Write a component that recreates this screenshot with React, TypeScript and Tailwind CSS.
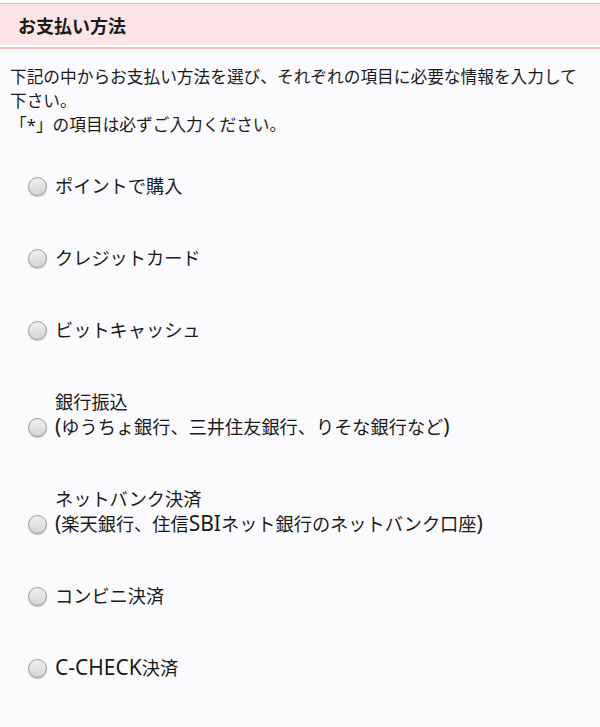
import React, { useState } from 'react';

const methods: { id: string; lines: string[] }[] = [
  { id: 'point', lines: ['ポイントで購入'] },
  { id: 'credit', lines: ['クレジットカード'] },
  { id: 'bitcash', lines: ['ビットキャッシュ'] },
  { id: 'bank', lines: ['銀行振込', '(ゆうちょ銀行、三井住友銀行、りそな銀行など)'] },
  { id: 'netbank', lines: ['ネットバンク決済', '(楽天銀行、住信SBIネット銀行のネットバンク口座)'] },
  { id: 'conveni', lines: ['コンビニ決済'] },
  { id: 'ccheck', lines: ['C-CHECK決済'] },
];

// latin runs are set a little larger so they sit level with the kana
const mixed = (s: string) =>
  s.split(/([\x21-\x7e]+)/).map((part, i) =>
    /^[\x21-\x7e]+$/.test(part) ? (
      <span key={i} className="text-[21px] leading-[20px]">
        {part}
      </span>
    ) : (
      part
    )
  );

const Radio = ({ checked }: { checked: boolean }) => (
  <span className="relative block w-[19px] h-[19px] rounded-full border border-[#9c9c9c] bg-gradient-to-b from-[#f0f0f0] to-[#d4d4d4] shadow-[0_1px_1px_rgba(0,0,0,0.25)]">
    {checked && (
      <span className="absolute left-[4px] top-[4px] w-[9px] h-[9px] rounded-full bg-[#3b82f6]" />
    )}
  </span>
);

const App = () => {
  const [selected, setSelected] = useState('');

  return (
    <div
      className="min-h-[727px] bg-[#fbfbfd] text-[#1a1a1a] pt-[3px]"
      style={{ fontFamily: '"Noto Sans", "Noto Sans CJK JP", sans-serif' }}
    >
      {/* section header */}
      <div className="border-b-2 border-[#f8b9bb]">
        <div className="h-[44px] border-t border-[#f7b3b5] border-b-2 border-b-white bg-[#fde5e7] flex items-center pl-[18px]">
          <h2 className="text-[18px] font-bold leading-none pt-[3px]">お支払い方法</h2>
        </div>
      </div>

      <p className="px-[10px] pt-[16px] text-[16.7px] leading-[24px]">
        下記の中からお支払い方法を選び、それぞれの項目に必要な情報を入力して下さい。
        <br />
        「*」の項目は必ずご入力ください。
      </p>

      <ul className="mt-[37px] pl-[28px] flex flex-col gap-[47px]">
        {methods.map((m) => (
          <li key={m.id}>
            <label
              className="flex items-end gap-[8px] cursor-pointer"
              onClick={() => setSelected(m.id)}
            >
              <span className="flex shrink-0 mb-[3px]">
                <Radio checked={selected === m.id} />
              </span>
              <span className="text-[18.2px] leading-[25px]">
                {m.lines.map((l, i) => (
                  <span key={i} className="block">
                    {mixed(l)}
                  </span>
                ))}
              </span>
            </label>
          </li>
        ))}
      </ul>
    </div>
  );
};

export default App;
